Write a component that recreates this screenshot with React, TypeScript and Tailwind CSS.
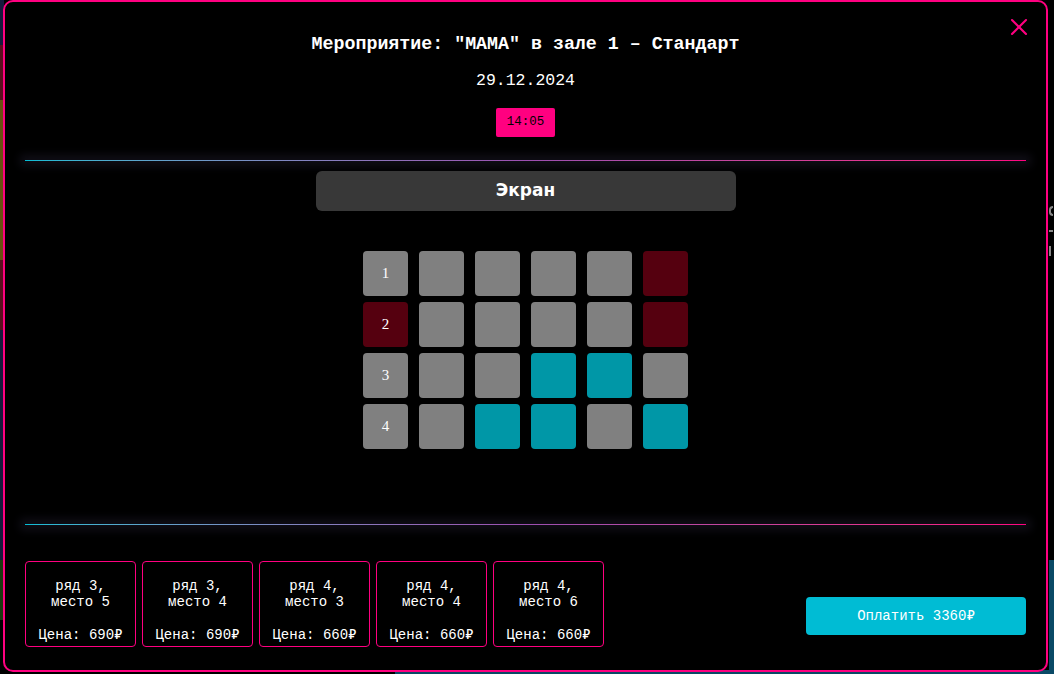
import { X } from "lucide-react";

type SeatState = "free" | "taken" | "picked";

const rows: SeatState[][] = [
  ["free", "free", "free", "free", "free", "taken"],
  ["taken", "free", "free", "free", "free", "taken"],
  ["free", "free", "free", "picked", "picked", "free"],
  ["free", "free", "picked", "picked", "free", "picked"],
];

const tickets = [
  { row: 3, seat: 5, price: 690 },
  { row: 3, seat: 4, price: 690 },
  { row: 4, seat: 3, price: 660 },
  { row: 4, seat: 4, price: 660 },
  { row: 4, seat: 6, price: 660 },
];

const seatColor: Record<SeatState, string> = {
  free: "bg-[#808080]",
  taken: "bg-[#55000f]",
  picked: "bg-[#0097a7]",
};

const mono = "font-['Liberation_Mono','DejaVu_Sans_Mono',monospace]";

function Divider() {
  return (
    <div className="h-px w-full bg-linear-to-r from-[#00bcd4] via-[#9c4fb0] to-[#ff0080] shadow-[0_0_10px_5px_rgba(24,22,34,0.7)]" />
  );
}

export default function App() {
  const total = tickets.reduce((sum, t) => sum + t.price, 0);

  return (
    <div className="relative h-[674px] w-[1054px] overflow-hidden bg-black">
      {/* page behind the modal */}
      <div className="flex h-full w-[4px] flex-col">
        <div className="h-[45px] bg-[#141a3c]" />
        <div className="h-[55px] bg-[#5a0f1e]" />
        <div className="h-[160px] bg-[#6a5010]" />
        <div className="h-[70px] bg-[#5a0f1e]" />
        <div className="h-[230px] bg-[#141a3c]" />
        <div className="h-[60px] bg-[#1a3a10]" />
      </div>
      <div className="absolute left-[1049px] top-[206px] flex flex-col gap-[14px]">
        <div className="h-[10px] w-[4px] rounded-l-full border-2 border-r-0 border-[#888]" />
        <div className="h-[2px] w-[4px] bg-[#888]" />
        <div className="h-[10px] w-[2px] bg-[#888]" />
      </div>
      <div className="absolute left-[1049px] top-[560px] h-[114px] w-[5px] bg-[#0a4a66]" />
      <div className="absolute left-[395px] top-[670px] h-[4px] w-[659px] bg-[#0a4a66]" />

      {/* modal */}
      <div className="absolute left-[3px] top-0 flex h-[672px] w-[1045px] flex-col rounded-[10px] border-2 border-[#ff0080] bg-black px-[20px] pb-[23px] pt-[30px] text-white">
        <button className="absolute right-[13px] top-[11px] text-[#ff0080]">
          <X size={28} strokeWidth={1.8} />
        </button>

        <h1 className={`${mono} text-center text-[18.3px] font-bold leading-[24px]`}>
          Мероприятие: "МАМА" в зале 1 – Стандарт
        </h1>
        <p className={`${mono} mt-[13px] text-center text-[16.5px] leading-[24px]`}>29.12.2024</p>
        <div className="mt-[15px] flex justify-center">
          <span className={`${mono} rounded-[2px] bg-[#ff0080] px-[11px] text-[12.5px] leading-[29px] text-black`}>
            14:05
          </span>
        </div>

        <div className="mt-[23px]">
          <Divider />
        </div>

        <div className="mt-[10px] flex justify-center">
          <div className="flex h-[40px] w-[420px] items-center justify-center rounded-[6px] bg-[#383838] font-['DejaVu_Sans',sans-serif] text-[17px] font-bold">
            Экран
          </div>
        </div>

        {/* seats */}
        <div className="mt-[40px] flex flex-col items-center gap-[6px]">
          {rows.map((row, r) => (
            <div key={r} className="flex gap-[11px]">
              {row.map((s, i) => (
                <div
                  key={i}
                  className={`flex h-[45px] w-[45px] items-center justify-center rounded-[4px] ${seatColor[s]} font-['Liberation_Serif',serif] text-[15px]`}
                >
                  {i === 0 ? r + 1 : ""}
                </div>
              ))}
            </div>
          ))}
        </div>

        <div className="mt-[75px]">
          <Divider />
        </div>

        {/* tickets + pay */}
        <div className="mt-auto flex items-end justify-between">
          <div className="flex gap-[6px]">
            {tickets.map((t) => (
              <div
                key={`${t.row}-${t.seat}`}
                className={`${mono} flex h-[86px] w-[111px] flex-col items-center rounded-[4px] border border-[#ff0080] pb-[3px] pt-[16px] text-center text-[14px] leading-[16px]`}
              >
                <div>
                  ряд {t.row},
                  <br />
                  место {t.seat}
                </div>
                <div className="mt-auto">Цена: {t.price}₽</div>
              </div>
            ))}
          </div>
          <button
            className={`${mono} mb-[12px] h-[38px] w-[220px] rounded-[4px] bg-[#00bcd4] text-[14px] text-white`}
          >
            Оплатить {total}₽
          </button>
        </div>
      </div>
    </div>
  );
}
